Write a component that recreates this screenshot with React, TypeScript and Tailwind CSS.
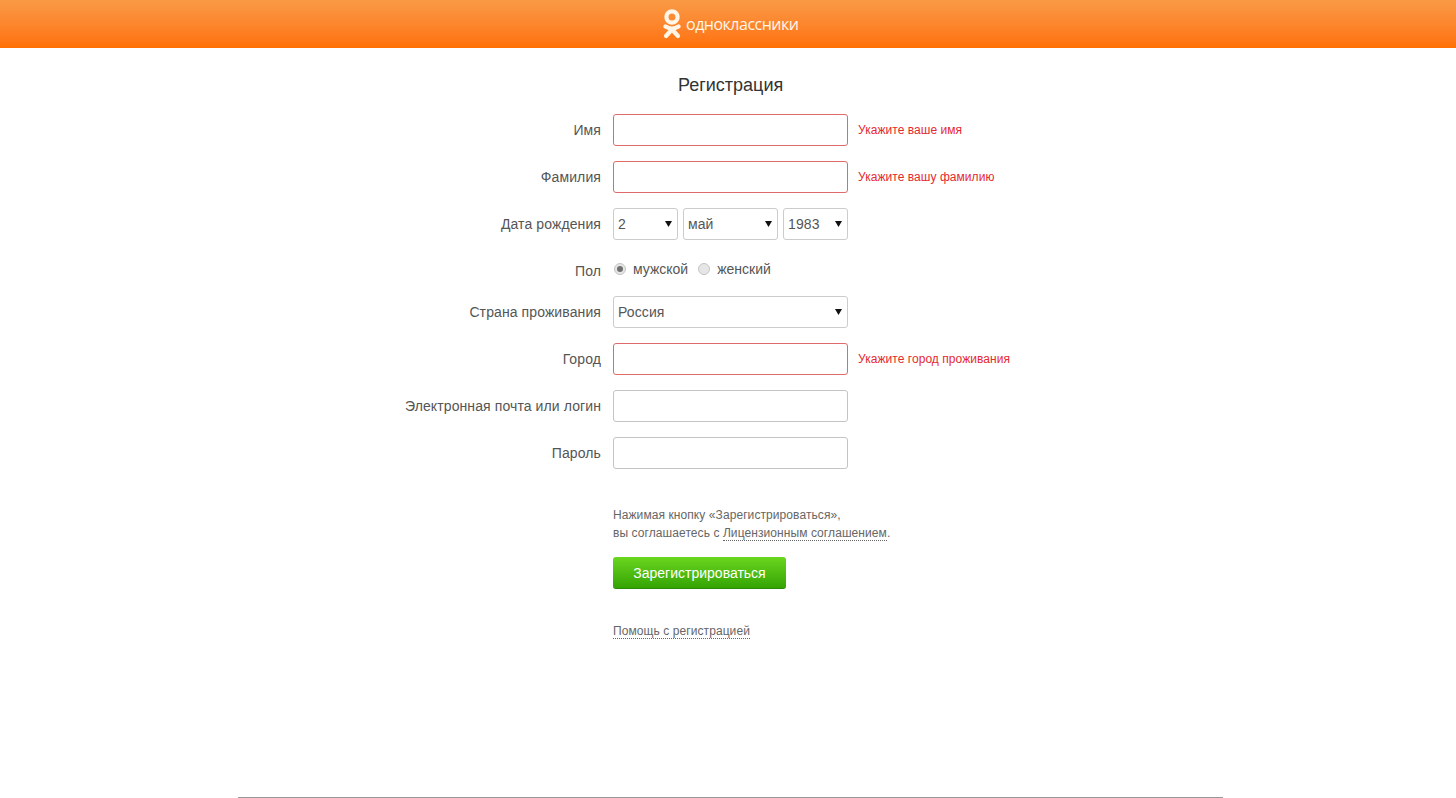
import React from 'react';

const fontStack = "[font-family:'Liberation_Sans',Arial,sans-serif]";

function OkLogo() {
  return (
    <svg width="18" height="30" viewBox="0 0 18 30" fill="none" stroke="#fff6e8" strokeLinecap="round">
      <circle cx="9" cy="8" r="5.6" strokeWidth="4.2" />
      <path d="M2.5 17.5c4 2.6 9 2.6 13 0" strokeWidth="4.2" />
      <path d="M9 20.5 3 27M9 20.5 15 27" strokeWidth="4.2" />
    </svg>
  );
}

function Arrow() {
  return (
    <svg width="7" height="6" viewBox="0 0 7 6" className="shrink-0">
      <path d="M0 0h7L3.5 6z" fill="#111" />
    </svg>
  );
}

function FormRow({ label, error, children, short }: { label: string; error?: string; children: React.ReactNode; short?: boolean }) {
  return (
    <div className={`flex items-center ${short ? 'h-[26px]' : 'h-8'}`}>
      <div className={`w-[363px] text-right text-sm tracking-[0.1px] text-[#555] ${short ? 'mt-1.5' : ''}`}>{label}</div>
      <div className="ml-3 w-[235px] flex">{children}</div>
      {error && <div className="ml-2.5 text-xs tracking-[0.05px] text-[#e6282f]">{error}</div>}
    </div>
  );
}

function TextInput({ invalid }: { invalid?: boolean }) {
  return (
    <input
      type="text"
      className={`w-full h-8 rounded-[3px] border bg-white outline-none ${
        invalid ? 'border-[#e06a6a]' : 'border-[#c4c4c4]'
      }`}
    />
  );
}

function SelectBox({ value, width }: { value: string; width: string }) {
  return (
    <div className={`${width} h-8 flex items-center justify-between pl-1 pr-[5px] rounded-[3px] border border-[#cccccc] text-sm tracking-[0.1px] text-[#555] bg-white`}>
      <span>{value}</span>
      <Arrow />
    </div>
  );
}

function Radio({ checked, label }: { checked?: boolean; label: string }) {
  return (
    <div className="flex items-center gap-[7px]">
      <span className="w-3 h-3 rounded-full border border-[#c4c4c4] bg-[#e6e6e6] flex items-center justify-center">
        {checked && <span className="w-1.5 h-1.5 rounded-full bg-[#707070]" />}
      </span>
      <span className="text-sm text-[#555]">{label}</span>
    </div>
  );
}

export default function App() {
  return (
    <div className={`h-[798px] flex flex-col bg-white overflow-hidden ${fontStack}`}>
      <header className="h-12 shrink-0 flex items-center bg-gradient-to-b from-[#f99a45] to-[#ff7000]">
        <div className="ml-[663px] flex items-center gap-[5px]">
          <OkLogo />
          <span className="text-base text-[#fff6e8] [font-family:'Open_Sans',sans-serif] tracking-[-0.5px]">одноклассники</span>
        </div>
      </header>

      <main className="ml-[238px] w-[985px] flex-1 flex flex-col">
        <h1 className="mt-[26px] ml-[440px] text-lg leading-[22px] text-[#333]">Регистрация</h1>

        <div className="mt-[18px] flex flex-col gap-[15px]">
          <FormRow label="Имя" error="Укажите ваше имя">
            <TextInput invalid />
          </FormRow>
          <FormRow label="Фамилия" error="Укажите вашу фамилию">
            <TextInput invalid />
          </FormRow>
          <FormRow label="Дата рождения">
            <div className="flex gap-[5px] w-full">
              <SelectBox value="2" width="w-[65px]" />
              <SelectBox value="май" width="w-[95px]" />
              <SelectBox value="1983" width="w-[65px]" />
            </div>
          </FormRow>
          <FormRow label="Пол" short>
            <div className="flex gap-[10px] ml-px mt-[2px]">
              <Radio checked label="мужской" />
              <Radio label="женский" />
            </div>
          </FormRow>
          <FormRow label="Страна проживания">
            <SelectBox value="Россия" width="w-full" />
          </FormRow>
          <FormRow label="Город" error="Укажите город проживания">
            <TextInput invalid />
          </FormRow>
          <FormRow label="Электронная почта или логин">
            <TextInput />
          </FormRow>
          <FormRow label="Пароль">
            <TextInput />
          </FormRow>
        </div>

        <div className="ml-[375px] mt-[37px] flex flex-col items-start">
          <p className="text-xs leading-[18px] tracking-[0.08px] text-[#666]">
            Нажимая кнопку «Зарегистрироваться»,
            <br />
            вы соглашаетесь с <a className="border-b border-dotted border-[#666]">Лицензионным соглашением</a>.
          </p>
          <button className="mt-[15px] w-[173px] h-8 rounded-[3px] text-sm text-white bg-gradient-to-b from-[#6ad61e] to-[#34a404] border-b border-[#2b8a05]">
            Зарегистрироваться
          </button>
          <a className="mt-[35px] text-xs leading-[14px] tracking-[0.08px] text-[#666] border-b border-dotted border-[#666]">Помощь с регистрацией</a>
        </div>
      </main>

      <footer className="ml-[238px] w-[985px] h-px shrink-0 bg-[#999]" />
    </div>
  );
}
